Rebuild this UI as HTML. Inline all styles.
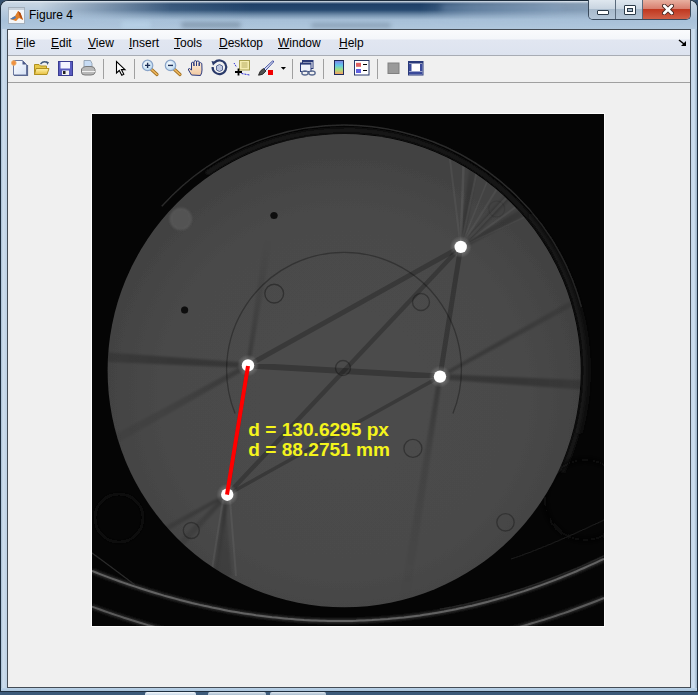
<!DOCTYPE html>
<html><head><meta charset="utf-8">
<style>
html,body{margin:0;padding:0;width:698px;height:695px;overflow:hidden;background:#34506e;position:relative;}
*{box-sizing:border-box;}
.abs{position:absolute;}
#win{position:absolute;left:0;top:0;width:698px;height:692px;border-radius:8px 8px 0 0;
 background:linear-gradient(90deg,#1c2c3c 0px,#a6bdd3 1px,#cfdfee 3px,#bcd0e4 7px,#bcd0e4 690px,#cfe0f0 694px,#9ab2c8 697px,#1c2c3c 698px);
 box-shadow:inset 0 1px 0 0 #1c2c3c, inset 1px 0 0 0 #1c2c3c, inset -1px 0 0 0 #1c2c3c;}
#wbot{position:absolute;left:1px;top:688px;width:696px;height:4px;background:linear-gradient(180deg,#bcd3e8 0,#aac4dc 3px,#1e2e40 3px);}
#title{position:absolute;left:1px;top:1px;width:696px;height:28px;border-radius:7px 7px 0 0;
 background:linear-gradient(180deg,#e6edf3 0px,#c8d6e3 2px,#b6cade 40%,#a8c1d9 70%,#b0c7dd 100%);overflow:hidden;}
#navy{position:absolute;left:0;top:0;width:696px;height:28px;
 background:linear-gradient(180deg,rgba(20,52,92,0) 0px,rgba(22,56,96,.96) 3px,rgba(26,62,102,.92) 9px,rgba(60,96,132,.55) 14px,rgba(150,178,205,.05) 19px,rgba(150,178,205,0) 28px);
 -webkit-mask-image:linear-gradient(90deg,rgba(0,0,0,0) 40px,rgba(0,0,0,.4) 100px,rgba(0,0,0,.85) 170px,#000 250px,#000 420px,rgba(0,0,0,.7) 470px,rgba(0,0,0,.4) 560px,rgba(0,0,0,.3) 650px,rgba(0,0,0,0) 690px);}
#client{position:absolute;left:7px;top:29px;width:684px;height:659px;border:1px solid #444c55;background:#f0f0f0;}
.menu{position:absolute;left:0;top:0;width:682px;height:26px;
 background:linear-gradient(180deg,#fafbfd 0px,#f4f6fa 9px,#e1e6f1 10px,#dde3ef 25px);
 border-bottom:1px solid #a8acb4;font:12px "Liberation Sans",sans-serif;color:#000;}
.menu span{position:absolute;top:6px;line-height:14px;}
.menu u{text-decoration:underline;text-underline-offset:1px;}
.tb{position:absolute;left:0;top:26px;width:682px;height:27px;background:#f0f0f0;border-bottom:1px solid #a0a0a0;}
.btns{position:absolute;top:0px;height:20px;border:1px solid #3c4c5e;border-top:none;overflow:hidden;}
.wb{position:absolute;top:0;height:19px;}
</style></head>
<body>
<div id="win">
 <div id="title">
  <div id="navy"></div>
  <div class="abs" style="left:180px;top:21px;width:60px;height:6px;border-radius:3px;background:rgba(70,90,110,.35);filter:blur(2px);"></div>
  <div class="abs" style="left:310px;top:22px;width:80px;height:5px;border-radius:3px;background:rgba(70,90,110,.3);filter:blur(2px);"></div>
  <div class="abs" style="left:120px;top:20px;width:30px;height:8px;border-radius:4px;background:rgba(200,230,250,.35);filter:blur(2px);"></div>
  <div class="abs" style="left:440px;top:3px;width:120px;height:8px;border-radius:4px;background:rgba(140,170,200,.35);filter:blur(3px);"></div>
  <svg class="abs" style="left:7px;top:6px" width="17" height="17" viewBox="0 0 17 17">
   <rect x="0.5" y="0.5" width="16" height="16" fill="#f4f6f8" stroke="#a4b0bc"/>
   <rect x="1" y="1" width="15" height="2" fill="#c8d2dc"/>
   <path d="M2,12 L7,9 L10,4 L12.5,6 L15,13 L11,11 L8,14 Z" fill="#e0802a"/>
   <path d="M2,12 L7,9 L8,11 L5,12.5 Z" fill="#4a7ab8"/>
   <path d="M10,4 L12.5,6 L15,13 L12,10 Z" fill="#b04a10"/>
  </svg>
  <div class="abs" style="left:28px;top:7px;font:12px 'Liberation Sans',sans-serif;color:#000;">Figure 4</div>
 </div>
 <div class="abs" style="left:588px;top:0;width:103px;height:20px;border-radius:0 0 5px 5px;border:1px solid #3a4a5c;border-top:none;overflow:hidden;">
  <div class="wb" style="left:0;width:27px;background:linear-gradient(180deg,#dfe7ef 0,#c9d5e1 45%,#a8bacc 50%,#b4c6d8 100%);border-right:1px solid #5a6a7c;"></div>
  <div class="wb" style="left:27px;width:27px;background:linear-gradient(180deg,#dfe7ef 0,#c9d5e1 45%,#a8bacc 50%,#b4c6d8 100%);border-right:1px solid #5a6a7c;"></div>
  <div class="wb" style="left:54px;width:48px;background:linear-gradient(180deg,#e8b0a0 0,#d88070 45%,#c03820 50%,#d06048 100%);"></div>
  <div class="abs" style="left:8px;top:10px;width:12px;height:5px;background:#fff;border:1px solid #2c3a48;border-radius:1px;"></div>
  <div class="abs" style="left:35px;top:5px;width:12px;height:10px;border:1px solid #2c3a48;border-radius:1px;background:transparent;box-shadow:inset 0 0 0 2px #fff, inset 0 0 0 3px #2c3a48;"></div>
  <svg class="abs" style="left:73px;top:4px" width="12" height="11" viewBox="0 0 12 11"><path d="M2.2,1.8 L9.8,9.2 M9.8,1.8 L2.2,9.2" stroke="#4a2a24" stroke-width="4.4" stroke-linecap="round"/><path d="M2.2,1.8 L9.8,9.2 M9.8,1.8 L2.2,9.2" stroke="#fff" stroke-width="2.6" stroke-linecap="round"/></svg>
 </div>
 <div id="client">
  <div class="menu">
   <span style="left:8px"><u>F</u>ile</span>
   <span style="left:43px"><u>E</u>dit</span>
   <span style="left:80px"><u>V</u>iew</span>
   <span style="left:121px"><u>I</u>nsert</span>
   <span style="left:166px"><u>T</u>ools</span>
   <span style="left:211px"><u>D</u>esktop</span>
   <span style="left:270px"><u>W</u>indow</span>
   <span style="left:331px"><u>H</u>elp</span>
   <svg class="abs" style="left:670px;top:9px" width="9" height="8" viewBox="0 0 9 8"><path d="M1,1 L6,5" stroke="#000" stroke-width="1.6"/><path d="M3,7 H8 V2 Z" fill="#000"/></svg>
  </div>
  <div class="tb"></div>
 </div>
 <div id="wbot"></div>
</div>
<div class="abs" style="left:0;top:692px;width:698px;height:3px;background:#3c5a7a;"></div>
<div class="abs" style="left:145px;top:692px;width:51px;height:3px;background:linear-gradient(#f4f8fc,#c8d8e8);border-radius:2px 2px 0 0;"></div>
<div class="abs" style="left:208px;top:692px;width:58px;height:3px;background:linear-gradient(#dfe8f0,#a8bccf);border-radius:2px 2px 0 0;"></div>
<div class="abs" style="left:270px;top:692px;width:56px;height:3px;background:linear-gradient(#dfe8f0,#a8bccf);border-radius:2px 2px 0 0;"></div>
<svg class="abs" style="left:0;top:0" width="698" height="100" viewBox="0 0 698 100">
<defs>
<linearGradient id="pg" x1="0" y1="0" x2="1" y2="1"><stop offset="0" stop-color="#ffffff"/><stop offset="1" stop-color="#d4e0f4"/></linearGradient>
<linearGradient id="fold" x1="0" y1="0" x2="0" y2="1"><stop offset="0" stop-color="#fff2a8"/><stop offset="1" stop-color="#e8c040"/></linearGradient>
<linearGradient id="cb" x1="0" y1="0" x2="0" y2="1"><stop offset="0" stop-color="#8080e8"/><stop offset="0.35" stop-color="#60c8e8"/><stop offset="0.65" stop-color="#a0e080"/><stop offset="1" stop-color="#ff9860"/></linearGradient>
<radialGradient id="lens" cx="0.4" cy="0.4" r="0.6"><stop offset="0" stop-color="#ffffff"/><stop offset="1" stop-color="#b8d8f0"/></radialGradient>
<linearGradient id="skin" x1="0" y1="0" x2="0" y2="1"><stop offset="0" stop-color="#fff0e0"/><stop offset="1" stop-color="#f0c8a0"/></linearGradient>
</defs>
<!-- new -->
<path d="M13.5,60.5 H22.5 L26.5,64.5 V75 H13.5 Z" fill="url(#pg)" stroke="#6a78a0" stroke-width="1"/>
<path d="M22.5,60.5 L26.5,64.5 H22.5 Z" fill="#4a5888"/>
<path d="M14,75.5 H27.5 V65" fill="none" stroke="#5a6890" stroke-width="1.2"/>
<circle cx="13.8" cy="63" r="2.4" fill="#f09040" stroke="#e8b070" stroke-width="0.8"/>
<!-- open -->
<path d="M34.5,64.5 H39 L40.5,66 H46.5 V74.5 H34.5 Z" fill="#e8c848" stroke="#b09020" stroke-width="1"/>
<path d="M36,68.5 H49 L47,74.5 H34.5 Z" fill="url(#fold)" stroke="#b09020" stroke-width="1"/>
<path d="M40.5,64 Q43.5,60.5 47,62.5" fill="none" stroke="#40587a" stroke-width="1.3"/>
<path d="M46,61 L49,62.2 L47.3,65 Z" fill="#40587a"/>
<!-- save -->
<rect x="58.5" y="61.5" width="14" height="14" fill="#5a5cc0" stroke="#3a3c90" stroke-width="1"/>
<rect x="60.5" y="62" width="9.5" height="6.5" fill="#f4f4ff"/>
<rect x="62" y="70.5" width="7" height="4.5" fill="#f0f0f0"/>
<rect x="63" y="71" width="2.5" height="3" fill="#202020"/>
<!-- print -->
<path d="M84,60.5 H90.5 L92,63.5 V68 H84 Z" fill="#c8dcf4" stroke="#8898a8" stroke-width="0.8"/>
<path d="M81.5,69 Q83,66.5 86,66.5 H91 Q94.5,66.5 95,69.5 V72.5 Q94.5,75 91,75 H85 Q81.5,75 81.5,72.5 Z" fill="#b8b8b8" stroke="#707070" stroke-width="0.9"/>
<path d="M82,71.5 H95" stroke="#f0f0f0" stroke-width="1"/>
<!-- seps -->
<rect x="103" y="59" width="1" height="20" fill="#a0a0a0"/>
<rect x="134" y="59" width="1" height="20" fill="#a0a0a0"/>
<rect x="292" y="59" width="1" height="20" fill="#a0a0a0"/>
<rect x="323" y="59" width="1" height="20" fill="#a0a0a0"/>
<rect x="377" y="59" width="1" height="20" fill="#a0a0a0"/>
<!-- arrow -->
<path d="M116.5,61.5 V73 L119.3,70.5 L121.8,75.2 L123.8,74.2 L121.4,69.6 H125 Z" fill="#fff" stroke="#000" stroke-width="1.1" stroke-linejoin="miter"/>
<!-- zoom in -->
<line x1="151.5" y1="69.5" x2="157" y2="74.5" stroke="#a07020" stroke-width="3.2" stroke-linecap="round"/>
<line x1="151.5" y1="69.5" x2="157" y2="74.5" stroke="#f0b860" stroke-width="1.6" stroke-linecap="round"/>
<circle cx="147.6" cy="65.4" r="5.2" fill="url(#lens)" stroke="#8aa4c8" stroke-width="1.2"/>
<path d="M145,65.4 H150.2 M147.6,62.8 V68" stroke="#1c3058" stroke-width="1.4"/>
<!-- zoom out -->
<line x1="174.5" y1="69.5" x2="180" y2="74.5" stroke="#a07020" stroke-width="3.2" stroke-linecap="round"/>
<line x1="174.5" y1="69.5" x2="180" y2="74.5" stroke="#f0b860" stroke-width="1.6" stroke-linecap="round"/>
<circle cx="170.5" cy="65.4" r="5.2" fill="url(#lens)" stroke="#8aa4c8" stroke-width="1.2"/>
<path d="M168,65.4 H173" stroke="#1c3058" stroke-width="1.4"/>
<!-- pan hand -->
<path d="M191.5,75 L188.5,70 Q188,68.5 189.5,68.5 L191.5,70 V63 Q192,61.5 193.5,62.5 L194,66 V61.5 Q195,60 196.5,61 V66 V61.5 Q198,60.3 199.2,61.5 V66 V63 Q200.5,62 201.8,63.5 L202,70 Q202,73 200.5,75.5 Z" fill="url(#skin)" stroke="#2a3a80" stroke-width="1"/>
<!-- rotate -->
<path d="M214.5,62.5 A6.8,6.8 0 1 1 212.6,67" fill="none" stroke="#2a3a6a" stroke-width="2.2"/>
<path d="M211.5,61 L216.5,62 L213,65.5 Z" fill="#2a3a6a"/>
<path d="M216.5,66 L219.5,64.5 L222.5,66 V70 L219.5,71.5 L216.5,70 Z" fill="#c0c8e0" stroke="#4a5a8a" stroke-width="0.9"/>
<!-- data cursor -->
<rect x="239.5" y="60.5" width="10" height="9.5" fill="#f4ecb0" stroke="#a8a050" stroke-width="1"/>
<path d="M241.5,63 H247.5 M241.5,65 H247.5 M241.5,67 H247.5" stroke="#a8a050" stroke-width="0.8"/>
<path d="M235,72 H242 M238.5,68.5 V75.5" stroke="#000" stroke-width="1.8"/>
<path d="M234,63 L236.5,67" stroke="#2a2ad0" stroke-width="1" stroke-dasharray="1.5,1"/>
<path d="M241.5,73.5 L249.5,75" stroke="#2a2ad0" stroke-width="1" stroke-dasharray="2,1"/>
<!-- brush -->
<path d="M264,69 L272.5,61 Q273.8,60.5 273.5,62 L265.5,70.5 Z" fill="#e8eef8" stroke="#3a48a0" stroke-width="1"/>
<path d="M263.5,68.5 L266,71 Q263,75.5 258.5,75.2 Q259.5,70.5 263.5,68.5 Z" fill="#505050" stroke="#202020" stroke-width="0.8"/>
<rect x="268" y="70" width="5" height="5" fill="#f00000"/>
<path d="M280.8,67 H286 L283.4,69.8 Z" fill="#000"/>
<!-- link -->
<rect x="302.5" y="60.5" width="10.5" height="8" fill="#fff" stroke="#2a3a78" stroke-width="1"/>
<rect x="302.5" y="60.5" width="10.5" height="1.6" fill="#2a3a78"/>
<rect x="300.5" y="63" width="10.5" height="8.5" fill="#eef2fa" stroke="#2a3a78" stroke-width="1"/>
<rect x="300.5" y="63" width="10.5" height="1.6" fill="#2a3a78"/>
<ellipse cx="305" cy="73" rx="3.2" ry="2" fill="none" stroke="#5a6a90" stroke-width="1.3"/>
<ellipse cx="312" cy="73" rx="3.2" ry="2" fill="none" stroke="#5a6a90" stroke-width="1.3"/>
<!-- colorbar -->
<rect x="334.5" y="60.5" width="9" height="14" fill="url(#cb)" stroke="#1e2a5a" stroke-width="1"/>
<!-- legend -->
<rect x="354.5" y="60.5" width="14.5" height="14.5" fill="#fff" stroke="#2a3a6a" stroke-width="1"/>
<rect x="356" y="62.8" width="5" height="4" fill="#e06060"/>
<rect x="356" y="69" width="5" height="4" fill="#6060e0"/>
<path d="M363,64.5 H367 M363,70.5 H367" stroke="#000" stroke-width="1"/>
<!-- gray square -->
<rect x="388" y="63" width="11" height="10.5" fill="#9a9a9a" stroke="#808080" stroke-width="1"/>
<!-- plot tools -->
<rect x="408.5" y="61.5" width="14.5" height="13.5" fill="#fff" stroke="#2a3a7a" stroke-width="1"/>
<rect x="408.5" y="61.5" width="14.5" height="2" fill="#2a3a7a"/>
<rect x="409" y="64" width="2.5" height="7" fill="#3a4a9a"/>
<rect x="420" y="64" width="2.5" height="7" fill="#3a4a9a"/>
<rect x="409" y="71.5" width="13.5" height="3" fill="#3a4a9a"/>
</svg>

<svg class="abs" style="left:0;top:0" width="698" height="695" viewBox="0 0 698 695"><defs>
<filter id="b05" x="-10%" y="-10%" width="120%" height="120%"><feGaussianBlur stdDeviation="0.6"/></filter>
<filter id="b1" x="-20%" y="-20%" width="140%" height="140%"><feGaussianBlur stdDeviation="1.2"/></filter>
<filter id="b2" x="-20%" y="-20%" width="140%" height="140%"><feGaussianBlur stdDeviation="2.5"/></filter>
<radialGradient id="halo"><stop offset="0.5" stop-color="#fff" stop-opacity="0.22"/><stop offset="1" stop-color="#fff" stop-opacity="0"/></radialGradient><radialGradient id="dg" cx="0.5" cy="0.55" r="0.5"><stop offset="0" stop-color="#4c4c4c"/><stop offset="0.7" stop-color="#4a4a4a"/><stop offset="1" stop-color="#434343"/></radialGradient><linearGradient id="g0" gradientUnits="userSpaceOnUse" x1="248.0" y1="365.4" x2="28.4" y2="352.6"><stop offset="0" stop-color="#000" stop-opacity="0.260"/><stop offset="0.35" stop-color="#000" stop-opacity="0.260"/><stop offset="1" stop-color="#000" stop-opacity="0"/></linearGradient><linearGradient id="g1" gradientUnits="userSpaceOnUse" x1="440.0" y1="376.6" x2="679.6" y2="390.6"><stop offset="0" stop-color="#000" stop-opacity="0.260"/><stop offset="0.35" stop-color="#000" stop-opacity="0.260"/><stop offset="1" stop-color="#000" stop-opacity="0"/></linearGradient><linearGradient id="g2" gradientUnits="userSpaceOnUse" x1="248.0" y1="365.4" x2="73.3" y2="462.7"><stop offset="0" stop-color="#000" stop-opacity="0.240"/><stop offset="0.35" stop-color="#000" stop-opacity="0.130"/><stop offset="1" stop-color="#000" stop-opacity="0"/></linearGradient><linearGradient id="g3" gradientUnits="userSpaceOnUse" x1="460.7" y1="246.9" x2="583.0" y2="178.8"><stop offset="0" stop-color="#000" stop-opacity="0.240"/><stop offset="0.35" stop-color="#000" stop-opacity="0.178"/><stop offset="1" stop-color="#000" stop-opacity="0"/></linearGradient><linearGradient id="g4" gradientUnits="userSpaceOnUse" x1="248.0" y1="365.4" x2="268.6" y2="237.0"><stop offset="0" stop-color="#000" stop-opacity="0.220"/><stop offset="0.35" stop-color="#000" stop-opacity="0.134"/><stop offset="1" stop-color="#000" stop-opacity="0"/></linearGradient><linearGradient id="g5" gradientUnits="userSpaceOnUse" x1="227.25" y1="494.7" x2="209.8" y2="603.3"><stop offset="0" stop-color="#000" stop-opacity="0.220"/><stop offset="0.35" stop-color="#000" stop-opacity="0.104"/><stop offset="1" stop-color="#000" stop-opacity="0"/></linearGradient><linearGradient id="g6" gradientUnits="userSpaceOnUse" x1="440.0" y1="376.6" x2="402.2" y2="613.6"><stop offset="0" stop-color="#000" stop-opacity="0.260"/><stop offset="0.35" stop-color="#000" stop-opacity="0.105"/><stop offset="1" stop-color="#000" stop-opacity="0"/></linearGradient><linearGradient id="g7" gradientUnits="userSpaceOnUse" x1="460.7" y1="246.9" x2="482.8" y2="108.6"><stop offset="0" stop-color="#000" stop-opacity="0.260"/><stop offset="0.35" stop-color="#000" stop-opacity="0.176"/><stop offset="1" stop-color="#000" stop-opacity="0"/></linearGradient><linearGradient id="g8" gradientUnits="userSpaceOnUse" x1="440.0" y1="376.6" x2="632.4" y2="269.8"><stop offset="0" stop-color="#000" stop-opacity="0.240"/><stop offset="0.35" stop-color="#000" stop-opacity="0.211"/><stop offset="1" stop-color="#000" stop-opacity="0"/></linearGradient><linearGradient id="g9" gradientUnits="userSpaceOnUse" x1="227.25" y1="494.7" x2="113.6" y2="557.8"><stop offset="0" stop-color="#000" stop-opacity="0.240"/><stop offset="0.35" stop-color="#000" stop-opacity="0.162"/><stop offset="1" stop-color="#000" stop-opacity="0"/></linearGradient><linearGradient id="g10" gradientUnits="userSpaceOnUse" x1="227.25" y1="494.7" x2="151.8" y2="574.8"><stop offset="0" stop-color="#000" stop-opacity="0.240"/><stop offset="0.35" stop-color="#000" stop-opacity="0.130"/><stop offset="1" stop-color="#000" stop-opacity="0"/></linearGradient><linearGradient id="g11" gradientUnits="userSpaceOnUse" x1="460.7" y1="246.9" x2="556.7" y2="145.0"><stop offset="0" stop-color="#000" stop-opacity="0.240"/><stop offset="0.35" stop-color="#000" stop-opacity="0.178"/><stop offset="1" stop-color="#000" stop-opacity="0"/></linearGradient><clipPath id="disk"><circle cx="344.2" cy="370.6" r="236.6"/></clipPath>
<clipPath id="img"><rect x="92" y="114" width="512" height="512"/></clipPath>
</defs><rect x="91" y="113" width="514" height="514" fill="#fdfdfd"/><rect x="92" y="114" width="512" height="512" fill="#050505"/><g clip-path="url(#img)"><path d="M206.3,173.6 A240.5,240.5 0 0 1 562.2,472.2" fill="none" stroke="#181818" stroke-width="5" filter="url(#b1)"/><path d="M161.8,206.3 A245.5,245.5 0 0 1 581.3,307.1" fill="none" stroke="#2a2a2a" stroke-width="1.4" filter="url(#b05)"/><path d="M530.3,214.4 A243,243 0 0 1 578.9,433.5" fill="none" stroke="#141414" stroke-width="4" filter="url(#b2)"/><circle cx="119" cy="518" r="24" fill="none" stroke="#0b0b0b" stroke-width="3" filter="url(#b1)"/><circle cx="585" cy="500" r="40" fill="none" stroke="#090909" stroke-width="4" filter="url(#b2)"/><path d="M92,553 Q110,566 135,585" fill="none" stroke="#2a2a2a" stroke-width="1.3" filter="url(#b05)"/><path d="M511,559 Q545,548 604,520" fill="none" stroke="#1a1a1a" stroke-width="1.3" filter="url(#b05)"/><path d="M92.0,570.9 L96.0,572.5 L100.0,574.1 L104.0,575.6 L108.0,577.1 L112.0,578.6 L116.0,580.0 L120.0,581.5 L124.0,582.9 L128.0,584.3 L132.0,585.6 L136.0,586.9 L140.0,588.2 L144.0,589.5 L148.0,590.8 L152.0,592.0 L156.0,593.2 L160.0,594.4 L164.0,595.6 L168.0,596.7 L172.0,597.8 L176.0,598.9 L180.0,600.0 L184.0,601.0 L188.0,602.0 L192.0,603.0 L196.0,603.9 L200.0,604.9 L204.0,605.8 L208.0,606.6 L212.0,607.5 L216.0,608.3 L220.0,609.1 L224.0,609.9 L228.0,610.7 L232.0,611.4 L236.0,612.1 L240.0,612.8 L244.0,613.4 L248.0,614.0 L252.0,614.6 L256.0,615.2 L260.0,615.7 L264.0,616.2 L268.0,616.7 L272.0,617.2 L276.0,617.6 L280.0,618.0 L284.0,618.4 L288.0,618.8 L292.0,619.1 L296.0,619.4 L300.0,619.7 L304.0,620.0 L308.0,620.2 L312.0,620.4 L316.0,620.5 L320.0,620.7 L324.0,620.8 L328.0,620.9 L332.0,621.0 L336.0,621.0 L340.0,621.0 L344.0,621.0 L348.0,620.9 L352.0,620.9 L356.0,620.8 L360.0,620.6 L364.0,620.5 L368.0,620.3 L372.0,620.1 L376.0,619.8 L380.0,619.6 L384.0,619.3 L388.0,619.0 L392.0,618.6 L396.0,618.2 L400.0,617.8 L404.0,617.4 L408.0,616.9 L412.0,616.4 L416.0,615.9 L420.0,615.4 L424.0,614.8 L428.0,614.2 L432.0,613.6 L436.0,612.9 L440.0,612.2 L444.0,611.5 L448.0,610.7 L452.0,610.0 L456.0,609.2 L460.0,608.3 L464.0,607.5 L468.0,606.6 L472.0,605.7 L476.0,604.7 L480.0,603.7 L484.0,602.7 L488.0,601.7 L492.0,600.6 L496.0,599.5 L500.0,598.4 L504.0,597.3 L508.0,596.1 L512.0,594.9 L516.0,593.6 L520.0,592.4 L524.0,591.1 L528.0,589.7 L532.0,588.4 L536.0,587.0 L540.0,585.6 L544.0,584.1 L548.0,582.6 L552.0,581.1 L556.0,579.6 L560.0,578.0 L564.0,576.4 L568.0,574.8 L572.0,573.1 L576.0,571.5 L580.0,569.7 L584.0,568.0 L588.0,566.2 L592.0,564.4 L596.0,562.6 L600.0,560.7 L604.0,558.8" fill="none" stroke="#2a2a2a" stroke-width="5" filter="url(#b1)"/><path d="M92.0,570.9 L96.0,572.5 L100.0,574.1 L104.0,575.6 L108.0,577.1 L112.0,578.6 L116.0,580.0 L120.0,581.5 L124.0,582.9 L128.0,584.3 L132.0,585.6 L136.0,586.9 L140.0,588.2 L144.0,589.5 L148.0,590.8 L152.0,592.0 L156.0,593.2 L160.0,594.4 L164.0,595.6 L168.0,596.7 L172.0,597.8 L176.0,598.9 L180.0,600.0 L184.0,601.0 L188.0,602.0 L192.0,603.0 L196.0,603.9 L200.0,604.9 L204.0,605.8 L208.0,606.6 L212.0,607.5 L216.0,608.3 L220.0,609.1 L224.0,609.9 L228.0,610.7 L232.0,611.4 L236.0,612.1 L240.0,612.8 L244.0,613.4 L248.0,614.0 L252.0,614.6 L256.0,615.2 L260.0,615.7 L264.0,616.2 L268.0,616.7 L272.0,617.2 L276.0,617.6 L280.0,618.0 L284.0,618.4 L288.0,618.8 L292.0,619.1 L296.0,619.4 L300.0,619.7 L304.0,620.0 L308.0,620.2 L312.0,620.4 L316.0,620.5 L320.0,620.7 L324.0,620.8 L328.0,620.9 L332.0,621.0 L336.0,621.0 L340.0,621.0 L344.0,621.0 L348.0,620.9 L352.0,620.9 L356.0,620.8 L360.0,620.6 L364.0,620.5 L368.0,620.3 L372.0,620.1 L376.0,619.8 L380.0,619.6 L384.0,619.3 L388.0,619.0 L392.0,618.6 L396.0,618.2 L400.0,617.8 L404.0,617.4 L408.0,616.9 L412.0,616.4 L416.0,615.9 L420.0,615.4 L424.0,614.8 L428.0,614.2 L432.0,613.6 L436.0,612.9 L440.0,612.2 L444.0,611.5 L448.0,610.7 L452.0,610.0 L456.0,609.2 L460.0,608.3 L464.0,607.5 L468.0,606.6 L472.0,605.7 L476.0,604.7 L480.0,603.7 L484.0,602.7 L488.0,601.7 L492.0,600.6 L496.0,599.5 L500.0,598.4 L504.0,597.3 L508.0,596.1 L512.0,594.9 L516.0,593.6 L520.0,592.4 L524.0,591.1 L528.0,589.7 L532.0,588.4 L536.0,587.0 L540.0,585.6 L544.0,584.1 L548.0,582.6 L552.0,581.1 L556.0,579.6 L560.0,578.0 L564.0,576.4 L568.0,574.8 L572.0,573.1 L576.0,571.5 L580.0,569.7 L584.0,568.0 L588.0,566.2 L592.0,564.4 L596.0,562.6 L600.0,560.7 L604.0,558.8" fill="none" stroke="#626262" stroke-width="2" filter="url(#b05)"/><path d="M440.0,612.2 L444.0,611.5 L448.0,610.7 L452.0,610.0 L456.0,609.2 L460.0,608.3 L464.0,607.5 L468.0,606.6 L472.0,605.7 L476.0,604.7 L480.0,603.7 L484.0,602.7 L488.0,601.7 L492.0,600.6 L496.0,599.5 L500.0,598.4 L504.0,597.3 L508.0,596.1 L512.0,594.9 L516.0,593.6 L520.0,592.4 L524.0,591.1 L528.0,589.7 L532.0,588.4 L536.0,587.0 L540.0,585.6 L544.0,584.1 L548.0,582.6 L552.0,581.1 L556.0,579.6 L560.0,578.0 L564.0,576.4 L568.0,574.8 L572.0,573.1 L576.0,571.5 L580.0,569.7 L584.0,568.0 L588.0,566.2 L592.0,564.4 L596.0,562.6 L600.0,560.7 L604.0,558.8" transform="translate(0,-3)" fill="none" stroke="#262626" stroke-width="1.2" filter="url(#b05)"/><path d="M92.0,606.6 L96.0,608.1 L100.0,609.5 L104.0,611.0 L108.0,612.4 L112.0,613.8 L116.0,615.1 L120.0,616.4 L124.0,617.8 L128.0,619.0 L132.0,620.3 L136.0,621.5 L140.0,622.7 L144.0,623.9 L148.0,625.1 L152.0,626.2 L156.0,627.3 L160.0,628.4 L164.0,629.5 L168.0,630.5 L172.0,631.5 L176.0,632.5 L180.0,633.5 L184.0,634.4 L188.0,635.4 L192.0,636.3 L196.0,637.1 L200.0,638.0 L204.0,638.8 L208.0,639.6 L212.0,640.4 L216.0,641.1 L220.0,641.8 L224.0,642.5 L228.0,643.2 L232.0,643.9 L236.0,644.5 L240.0,645.1 L244.0,645.7 L248.0,646.2 L252.0,646.7 L256.0,647.2 L260.0,647.7 L264.0,648.2 L268.0,648.6 L272.0,649.0 L276.0,649.4 L280.0,649.8 L284.0,650.1 L288.0,650.4 L292.0,650.7 L296.0,651.0 L300.0,651.2 L304.0,651.4 L308.0,651.6 L312.0,651.8 L316.0,651.9 L320.0,652.0 L324.0,652.1 L328.0,652.2 L332.0,652.2 L336.0,652.2 L340.0,652.2 L344.0,652.2 L348.0,652.1 L352.0,652.1 L356.0,652.0 L360.0,651.8 L364.0,651.7 L368.0,651.5 L372.0,651.3 L376.0,651.1 L380.0,650.8 L384.0,650.6 L388.0,650.3 L392.0,649.9 L396.0,649.6 L400.0,649.2 L404.0,648.8 L408.0,648.4 L412.0,648.0 L416.0,647.5 L420.0,647.0 L424.0,646.5 L428.0,645.9 L432.0,645.4 L436.0,644.8 L440.0,644.2 L444.0,643.5 L448.0,642.9 L452.0,642.2 L456.0,641.5 L460.0,640.7 L464.0,640.0 L468.0,639.2 L472.0,638.4 L476.0,637.5 L480.0,636.7 L484.0,635.8 L488.0,634.9 L492.0,634.0 L496.0,633.0 L500.0,632.0 L504.0,631.0 L508.0,630.0 L512.0,628.9 L516.0,627.9 L520.0,626.8 L524.0,625.6 L528.0,624.5 L532.0,623.3 L536.0,622.1 L540.0,620.9 L544.0,619.7 L548.0,618.4 L552.0,617.1 L556.0,615.8 L560.0,614.4 L564.0,613.1 L568.0,611.7 L572.0,610.2 L576.0,608.8 L580.0,607.3 L584.0,605.8 L588.0,604.3 L592.0,602.8 L596.0,601.2 L600.0,599.6 L604.0,598.0" fill="none" stroke="#262626" stroke-width="5" filter="url(#b1)"/><path d="M92.0,606.6 L96.0,608.1 L100.0,609.5 L104.0,611.0 L108.0,612.4 L112.0,613.8 L116.0,615.1 L120.0,616.4 L124.0,617.8 L128.0,619.0 L132.0,620.3 L136.0,621.5 L140.0,622.7 L144.0,623.9 L148.0,625.1 L152.0,626.2 L156.0,627.3 L160.0,628.4 L164.0,629.5 L168.0,630.5 L172.0,631.5 L176.0,632.5 L180.0,633.5 L184.0,634.4 L188.0,635.4 L192.0,636.3 L196.0,637.1 L200.0,638.0 L204.0,638.8 L208.0,639.6 L212.0,640.4 L216.0,641.1 L220.0,641.8 L224.0,642.5 L228.0,643.2 L232.0,643.9 L236.0,644.5 L240.0,645.1 L244.0,645.7 L248.0,646.2 L252.0,646.7 L256.0,647.2 L260.0,647.7 L264.0,648.2 L268.0,648.6 L272.0,649.0 L276.0,649.4 L280.0,649.8 L284.0,650.1 L288.0,650.4 L292.0,650.7 L296.0,651.0 L300.0,651.2 L304.0,651.4 L308.0,651.6 L312.0,651.8 L316.0,651.9 L320.0,652.0 L324.0,652.1 L328.0,652.2 L332.0,652.2 L336.0,652.2 L340.0,652.2 L344.0,652.2 L348.0,652.1 L352.0,652.1 L356.0,652.0 L360.0,651.8 L364.0,651.7 L368.0,651.5 L372.0,651.3 L376.0,651.1 L380.0,650.8 L384.0,650.6 L388.0,650.3 L392.0,649.9 L396.0,649.6 L400.0,649.2 L404.0,648.8 L408.0,648.4 L412.0,648.0 L416.0,647.5 L420.0,647.0 L424.0,646.5 L428.0,645.9 L432.0,645.4 L436.0,644.8 L440.0,644.2 L444.0,643.5 L448.0,642.9 L452.0,642.2 L456.0,641.5 L460.0,640.7 L464.0,640.0 L468.0,639.2 L472.0,638.4 L476.0,637.5 L480.0,636.7 L484.0,635.8 L488.0,634.9 L492.0,634.0 L496.0,633.0 L500.0,632.0 L504.0,631.0 L508.0,630.0 L512.0,628.9 L516.0,627.9 L520.0,626.8 L524.0,625.6 L528.0,624.5 L532.0,623.3 L536.0,622.1 L540.0,620.9 L544.0,619.7 L548.0,618.4 L552.0,617.1 L556.0,615.8 L560.0,614.4 L564.0,613.1 L568.0,611.7 L572.0,610.2 L576.0,608.8 L580.0,607.3 L584.0,605.8 L588.0,604.3 L592.0,602.8 L596.0,601.2 L600.0,599.6 L604.0,598.0" fill="none" stroke="#5a5a5a" stroke-width="2" filter="url(#b05)"/><circle cx="344.2" cy="370.6" r="236.6" fill="url(#dg)" filter="url(#b05)"/><g clip-path="url(#disk)"><path d="M235.1,413.6 A117.4,117.4 0 1 1 452.9,413.6" fill="none" stroke="#333" stroke-width="1.3"/><circle cx="274.2" cy="293.6" r="9.4" fill="none" stroke="#000" stroke-opacity="0.35" stroke-width="1.4" filter="url(#b05)"/><circle cx="421" cy="302" r="8.5" fill="none" stroke="#000" stroke-opacity="0.3" stroke-width="1.4" filter="url(#b05)"/><circle cx="343" cy="368" r="7.5" fill="none" stroke="#000" stroke-opacity="0.3" stroke-width="1.4" filter="url(#b05)"/><circle cx="412.9" cy="448.4" r="9" fill="none" stroke="#000" stroke-opacity="0.32" stroke-width="1.4" filter="url(#b05)"/><circle cx="505.5" cy="522.3" r="8.7" fill="none" stroke="#000" stroke-opacity="0.3" stroke-width="1.4" filter="url(#b05)"/><circle cx="191.3" cy="530.5" r="8" fill="none" stroke="#000" stroke-opacity="0.3" stroke-width="1.4" filter="url(#b05)"/><circle cx="496.7" cy="209" r="8" fill="none" stroke="#000" stroke-opacity="0.1" stroke-width="1.4" filter="url(#b05)"/><circle cx="180.8" cy="218.9" r="10.2" fill="#535353" stroke="#5a5a5a" stroke-width="1.5" filter="url(#b1)"/><line x1="248.0" y1="365.4" x2="440.0" y2="376.6" stroke="#000" stroke-opacity="0.26" stroke-width="6" filter="url(#b05)"/><polygon points="248.2,362.7 28.7,346.6 28.0,358.6 247.8,368.1" fill="url(#g0)" filter="url(#b1)"/><polygon points="439.8,379.3 679.2,396.6 679.9,384.6 440.2,373.9" fill="url(#g1)" filter="url(#b1)"/><line x1="248.0" y1="365.4" x2="460.7" y2="246.9" stroke="#000" stroke-opacity="0.24" stroke-width="5" filter="url(#b05)"/><polygon points="246.9,363.4 70.9,458.4 75.7,467.1 249.1,367.4" fill="url(#g2)" filter="url(#b1)"/><polygon points="461.8,248.9 585.4,183.1 580.6,174.4 459.6,244.9" fill="url(#g3)" filter="url(#b1)"/><line x1="248.0" y1="365.4" x2="227.25" y2="494.7" stroke="#000" stroke-opacity="0.22" stroke-width="4" filter="url(#b05)"/><polygon points="249.8,365.7 272.5,237.7 264.6,236.4 246.2,365.1" fill="url(#g4)" filter="url(#b1)"/><polygon points="225.5,494.4 205.9,602.7 213.8,603.9 229.0,495.0" fill="url(#g5)" filter="url(#b1)"/><line x1="440.0" y1="376.6" x2="460.7" y2="246.9" stroke="#000" stroke-opacity="0.26" stroke-width="5" filter="url(#b05)"/><polygon points="437.8,376.2 397.2,612.8 407.1,614.4 442.2,377.0" fill="url(#g6)" filter="url(#b1)"/><polygon points="462.9,247.3 487.7,109.4 477.8,107.9 458.5,246.5" fill="url(#g7)" filter="url(#b1)"/><line x1="440.0" y1="376.6" x2="227.25" y2="494.7" stroke="#000" stroke-opacity="0.24" stroke-width="3.5" filter="url(#b05)"/><polygon points="440.8,378.0 634.0,272.9 630.7,266.8 439.2,375.2" fill="url(#g8)" filter="url(#b1)"/><polygon points="226.5,493.3 111.9,554.7 115.3,560.9 228.0,496.1" fill="url(#g9)" filter="url(#b1)"/><line x1="227.25" y1="494.7" x2="460.7" y2="246.9" stroke="#000" stroke-opacity="0.24" stroke-width="4.5" filter="url(#b05)"/><polygon points="225.8,493.3 148.5,571.7 155.1,577.9 228.7,496.1" fill="url(#g10)" filter="url(#b1)"/><polygon points="462.2,248.3 560.0,148.1 553.4,141.9 459.2,245.5" fill="url(#g11)" filter="url(#b1)"/><path d="M225,500 L214,576 L232,576 Z" fill="#000" fill-opacity="0.12" filter="url(#b1)"/><path d="M223,500 L211,576" stroke="#fff" stroke-opacity="0.06" stroke-width="2" filter="url(#b05)"/><path d="M230,500 L236,576" stroke="#fff" stroke-opacity="0.06" stroke-width="2" filter="url(#b05)"/><circle cx="248.0" cy="365.4" r="11" fill="url(#halo)"/><circle cx="440.0" cy="376.6" r="11" fill="url(#halo)"/><circle cx="227.25" cy="494.7" r="11" fill="url(#halo)"/><circle cx="460.7" cy="246.9" r="11" fill="url(#halo)"/></g><g clip-path="url(#disk)"><line x1="460.7" y1="246.9" x2="444.9" y2="117.9" stroke="#fff" stroke-opacity="0.05" stroke-width="2" filter="url(#b05)"/><line x1="460.7" y1="246.9" x2="465.2" y2="117.0" stroke="#fff" stroke-opacity="0.07" stroke-width="2.5" filter="url(#b05)"/><line x1="460.7" y1="246.9" x2="487.7" y2="119.7" stroke="#fff" stroke-opacity="0.06" stroke-width="2" filter="url(#b05)"/><line x1="460.7" y1="246.9" x2="509.4" y2="126.4" stroke="#fff" stroke-opacity="0.05" stroke-width="1.5" filter="url(#b05)"/><line x1="460.7" y1="246.9" x2="529.6" y2="136.7" stroke="#fff" stroke-opacity="0.05" stroke-width="2" filter="url(#b05)"/><line x1="460.7" y1="246.9" x2="549.4" y2="151.8" stroke="#fff" stroke-opacity="0.07" stroke-width="2.5" filter="url(#b05)"/><line x1="460.7" y1="246.9" x2="565.9" y2="170.5" stroke="#fff" stroke-opacity="0.05" stroke-width="2" filter="url(#b05)"/><line x1="460.7" y1="246.9" x2="578.5" y2="192.0" stroke="#fff" stroke-opacity="0.04" stroke-width="1.5" filter="url(#b05)"/></g><circle cx="274" cy="215.5" r="3.6" fill="#0a0a0a" filter="url(#b05)"/><circle cx="184.6" cy="310" r="3.6" fill="#0a0a0a" filter="url(#b05)"/><circle cx="248.0" cy="365.4" r="6.2" fill="#fff"/><circle cx="440.0" cy="376.6" r="6.2" fill="#fff"/><circle cx="227.25" cy="494.7" r="6.2" fill="#fff"/><circle cx="460.7" cy="246.9" r="6.2" fill="#fff"/><line x1="248" y1="366" x2="227" y2="494.6" stroke="#f00" stroke-width="4"/><text x="248.3" y="436.3" font-family="Liberation Sans" font-weight="bold" font-size="19.1" fill="#f4f41c">d = 130.6295 px</text><text x="248.3" y="455.5" font-family="Liberation Sans" font-weight="bold" font-size="19.1" fill="#f4f41c">d = 88.2751 mm</text></g></svg>
</body></html>
